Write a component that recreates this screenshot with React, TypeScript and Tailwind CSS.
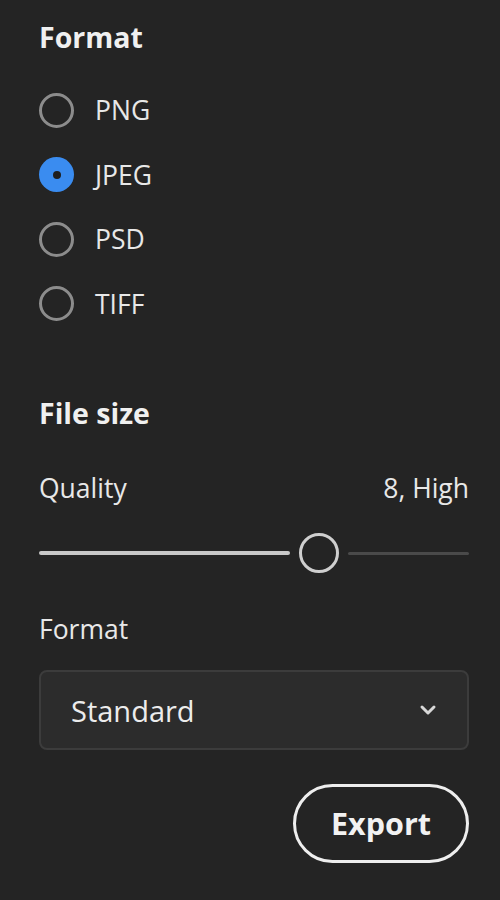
import { useState } from "react";

const formats = ["PNG", "JPEG", "PSD", "TIFF"];

function Radio({ checked }: { checked: boolean }) {
  if (checked) {
    return (
      <span className="flex h-[35px] w-[35px] items-center justify-center rounded-full bg-[#3a8cf0]">
        <span className="h-[8px] w-[8px] rounded-full bg-[#1e1e1e]" />
      </span>
    );
  }
  return <span className="h-[35px] w-[35px] rounded-full border-[3px] border-[#8c8c8c]" />;
}

export default function App() {
  const [format, setFormat] = useState("JPEG");

  return (
    <div
      className="min-h-[900px] w-[500px] bg-[#242424] pl-[39px] pr-[31px] pt-[19px] text-[#e8e8e8]"
      style={{ fontFamily: '"Open Sans", "Noto Sans", sans-serif' }}
    >
      <h2 className="h-[36px] text-[28.5px] font-bold leading-[36px] text-[#f0f0f0]">Format</h2>

      <div className="mt-[23px] flex flex-col">
        {formats.map((f) => (
          <button
            key={f}
            onClick={() => setFormat(f)}
            className="flex h-[64.5px] items-center gap-[21px] text-left"
          >
            <Radio checked={format === f} />
            <span className="text-[26.5px] leading-none">{f}</span>
          </button>
        ))}
      </div>

      <h2 className="mt-[59px] h-[36px] text-[28.5px] font-bold leading-[36px] text-[#f0f0f0]">File size</h2>

      <div className="mt-[39px] flex h-[36px] items-center justify-between text-[26.5px] leading-[36px]">
        <span>Quality</span>
        <span>8, High</span>
      </div>

      <div className="mt-[27px] flex h-[40px] items-center">
        <div className="h-[4px] w-[251px] rounded-full bg-[#c8c8c8]" />
        <div className="mx-[9px] h-[40px] w-[40px] shrink-0 rounded-full border-[3px] border-[#cfcfcf] bg-[#242424]" />
        <div className="h-[3px] flex-1 rounded-full bg-[#4a4a4a]" />
      </div>

      <div className="mt-[38px] h-[36px] text-[26.5px] leading-[36px]">Format</div>

      <div className="mt-[23px] flex h-[80px] items-center justify-between rounded-[8px] border-2 border-[#3c3c3c] bg-[#2c2c2c] pl-[30px] pr-[30px]">
        <span className="text-[29px] leading-none text-[#ececec]">Standard</span>
        <svg width="18" height="12" viewBox="0 0 18 12" fill="none">
          <path d="M3 3l6 6 6-6" stroke="#d8d8d8" strokeWidth="3" strokeLinecap="round" strokeLinejoin="round" />
        </svg>
      </div>

      <div className="mt-[34px] flex justify-end">
        <button className="flex h-[79px] w-[176px] items-center justify-center rounded-full border-[3px] border-[#eeeeee] text-[30.5px] font-bold text-[#f2f2f2]">
          Export
        </button>
      </div>
    </div>
  );
}
